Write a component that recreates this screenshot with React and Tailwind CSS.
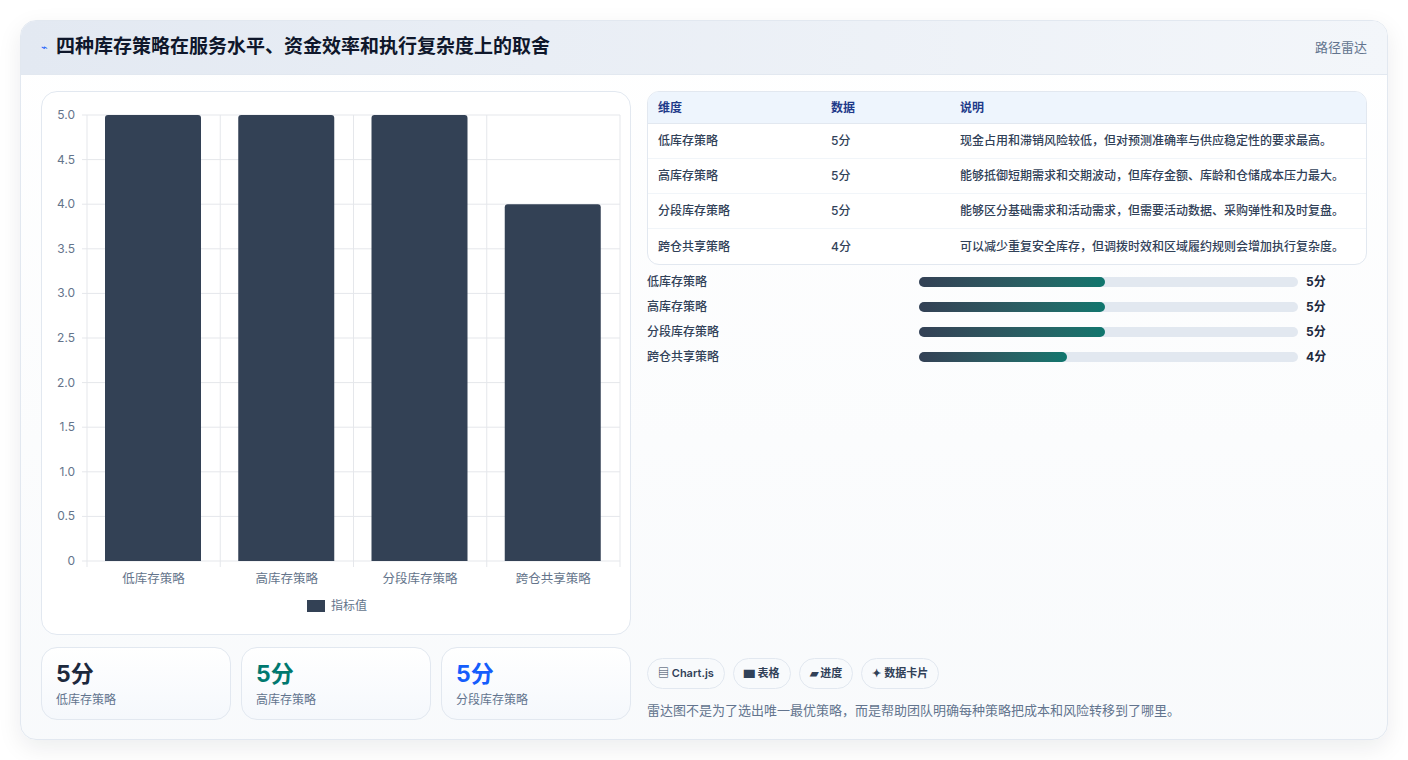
const rows = [
  ['低库存策略', 5, '现金占用和滞销风险较低，但对预测准确率与供应稳定性的要求最高。'],
  ['高库存策略', 5, '能够抵御短期需求和交期波动，但库存金额、库龄和仓储成本压力最大。'],
  ['分段库存策略', 5, '能够区分基础需求和活动需求，但需要活动数据、采购弹性和及时复盘。'],
  ['跨仓共享策略', 4, '可以减少重复安全库存，但调拨时效和区域履约规则会增加执行复杂度。'],
]

function Chart() {
  const L = 45, R = 578, T = 23, B = 469
  const h = (B - T) / 5
  const cw = (R - L) / 4
  const ticks = [0, 0.5, 1, 1.5, 2, 2.5, 3, 3.5, 4, 4.5, 5]
  return (
    <svg width="590" height="543" className="block">
      {ticks.map((t) => {
        const y = B - t * h
        return (
          <g key={t}>
            <line x1={L - 5} x2={R} y1={y} y2={y} stroke="#e5e7eb" />
            <text x={L - 12} y={y + 4} textAnchor="end" fontSize="12" fill="#64748b">{t.toFixed(1).replace('0.0', '0')}</text>
          </g>
        )
      })}
      {[0, 1, 2, 3, 4].map((i) => (
        <line key={i} x1={L + i * cw} x2={L + i * cw} y1={T} y2={B + 6} stroke="#e5e7eb" />
      ))}
      {rows.map((r, i) => {
        const x = L + i * cw + 18
        const y = B - r[1] * h
        return (
          <g key={i}>
            <path d={`M${x} ${B} V${y + 3} a3 3 0 0 1 3 -3 H${x + 93} a3 3 0 0 1 3 3 V${B} Z`} fill="#334155" />
            <text x={L + i * cw + cw / 2} y={B + 22} textAnchor="middle" fontSize="12.5" fill="#64748b">{r[0]}</text>
          </g>
        )
      })}
      <rect x="265" y="508" width="18" height="12" fill="#334155" />
      <text x="289" y="518" fontSize="12" fill="#64748b">指标值</text>
    </svg>
  )
}

export default function App() {
  return (
    <div className="min-h-[760px] bg-white p-5" style={{ fontFamily: 'Inter, "Noto Sans CJK SC", sans-serif' }}>
      <div className="h-[720px] overflow-hidden rounded-2xl border border-slate-200 bg-gradient-to-b from-white to-slate-50 shadow-[0_8px_24px_rgba(15,23,42,0.08)] flex flex-col">
        <div className="flex h-14 items-center justify-between border-b border-slate-200 bg-gradient-to-r from-[#e3e9f2] to-[#f3f6fa] px-5">
          <div className="flex items-center gap-2">
            <span className="text-[11px] text-blue-600">⌁</span>
            <h1 className="text-[19px] font-bold text-slate-900">四种库存策略在服务水平、资金效率和执行复杂度上的取舍</h1>
          </div>
          <span className="text-[13px] text-slate-500">路径雷达</span>
        </div>
        <div className="flex flex-1 gap-4 px-5 pt-4 pb-[19px]">
          <div className="flex w-[590px] flex-col gap-3">
            <div className="h-[544px] rounded-2xl border border-slate-200 bg-white">
              <Chart />
            </div>
            <div className="grid grid-cols-3 gap-2.5">
              {[['text-slate-800', 0], ['text-teal-700', 1], ['text-blue-600', 2]].map(([c, i]) => (
                <div key={i} className="h-[73px] rounded-2xl border border-slate-200 bg-gradient-to-b from-white to-[#f5f8fc] px-3.5 pt-3">
                  <div className={`text-[23px] font-bold leading-7 ${c}`}>5分</div>
                  <div className="mt-1 text-xs text-slate-500">{rows[i][0]}</div>
                </div>
              ))}
            </div>
          </div>
          <div className="flex flex-1 flex-col">
            <div className="overflow-hidden rounded-xl border border-slate-200 bg-white">
              <div className="grid h-8 grid-cols-[173px_129px_1fr] items-center border-b border-slate-200 bg-[#eef5fd] px-2.5 text-xs font-semibold text-[#1e3a8a]">
                <span>维度</span><span>数据</span><span>说明</span>
              </div>
              {rows.map((r, i) => (
                <div key={i} className={`grid h-[35px] grid-cols-[173px_129px_1fr] items-center px-2.5 text-xs font-medium text-slate-700 ${i < 3 ? 'border-b border-slate-100' : ''}`}>
                  <span>{r[0]}</span><span>{r[1]}分</span><span>{r[2]}</span>
                </div>
              ))}
            </div>
            <div className="mt-2 flex flex-col gap-[7px]">
              {rows.map((r, i) => (
                <div key={i} className="flex h-[18px] items-center text-xs font-medium text-slate-700">
                  <span className="w-[272px]">{r[0]}</span>
                  <div className="h-2.5 w-[379px] rounded-full bg-slate-200">
                    <div className="h-full rounded-full bg-gradient-to-r from-[#334155] to-[#0f766e]" style={{ width: `${r[1] * 10 - 1}%` }} />
                  </div>
                  <span className="ml-2 font-bold text-slate-800">{r[1]}分</span>
                </div>
              ))}
            </div>
            <div className="mt-auto flex gap-2">
              {['▤ Chart.js', '▆ 表格', '▰ 进度', '✦ 数据卡片'].map((t) => (
                <span key={t} className="rounded-full border border-slate-200 bg-slate-50 px-2.5 py-1.5 text-[11px] font-semibold text-slate-700">{t}</span>
              ))}
            </div>
            <p className="mt-3 text-[13px] text-slate-500">雷达图不是为了选出唯一最优策略，而是帮助团队明确每种策略把成本和风险转移到了哪里。</p>
          </div>
        </div>
      </div>
    </div>
  )
}
